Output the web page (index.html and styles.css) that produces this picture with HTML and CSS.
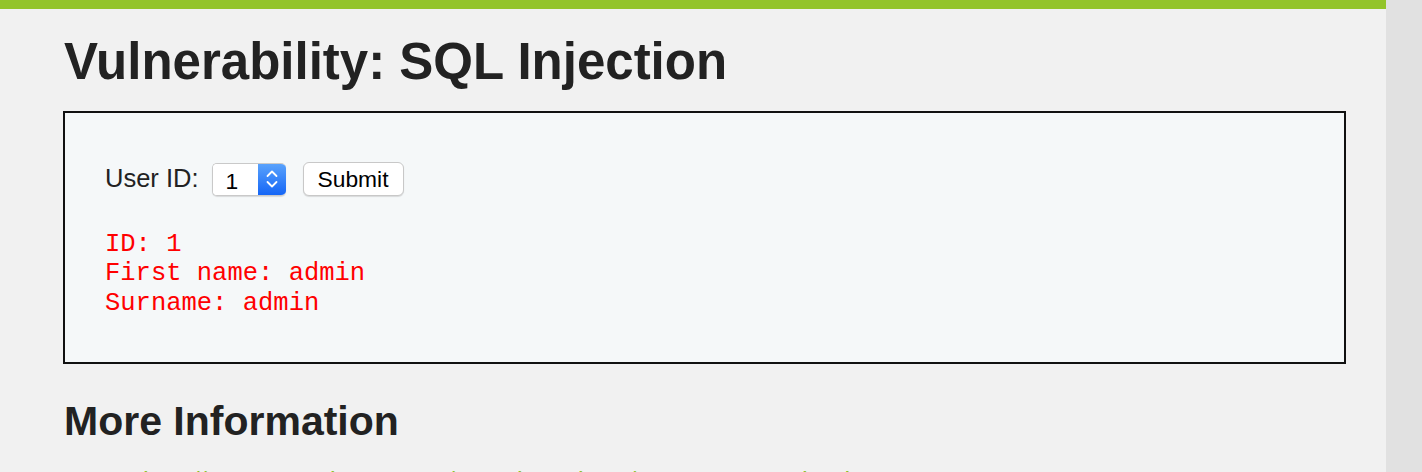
FILE: index.html
```html
<!DOCTYPE html>
<html lang="en">
<head>
<meta charset="utf-8">
<title>Vulnerability: SQL Injection</title>
<link rel="stylesheet" href="styles.css">
</head>
<body>
<div class="page">
  <div class="main">
    <div class="topbar"></div>
    <div class="content">
      <h1 class="title">Vulnerability: SQL Injection</h1>
      <div class="vuln">
        <form class="form-row" action="#" method="get">
          <label class="label" for="uid">User ID:</label>
          <span class="select-wrap">
            <select id="uid" class="select"><option>1</option></select>
            <span class="arrows">
              <svg width="12" height="22" viewBox="0 0 12 22" aria-hidden="true">
                <path d="M1.5 8 L6 3.5 L10.5 8" fill="none" stroke="#fff" stroke-width="1.8" stroke-linecap="round" stroke-linejoin="round"/>
                <path d="M1.5 14 L6 18.5 L10.5 14" fill="none" stroke="#fff" stroke-width="1.8" stroke-linecap="round" stroke-linejoin="round"/>
              </svg>
            </span>
          </span>
          <button class="submit" type="button">Submit</button>
        </form>
        <pre class="result">ID: 1
First name: admin
Surname: admin</pre>
      </div>
      <h2 class="subtitle">More Information</h2>
      <ul class="links">
        <li><a href="#">http://www.securiteam.com/securityreviews/5DP0N1P76E.html</a></li>
        <li><a href="#">https://en.wikipedia.org/wiki/SQL_injection</a></li>
      </ul>
    </div>
  </div>
  <div class="side"></div>
</div>
</body>
</html>
```
FILE: styles.css
```css
html, body {
  margin: 0;
  padding: 0;
  height: 472px;
  overflow: hidden;
}
body {
  background: #f1f1f1;
  font-family: "Liberation Sans", Arial, sans-serif;
  color: #222;
}
.page {
  display: flex;
  height: 472px;
}
.main {
  flex: 1;
  min-width: 0;
}
.side {
  width: 36px;
  background: #e1e1e1;
}
.topbar {
  height: 9px;
  background: #93c42a;
}
.content {
  padding: 0 40px 0 63px;
}
.title {
  margin: 24px 0 0 1px;
  font-size: 51px;
  line-height: 58px;
  font-weight: bold;
  color: #222;
}
.vuln {
  margin-top: 20px;
  border: 2px solid #111;
  background: #f5f8f9;
  padding: 49px 40px 44px 40px;
}
.form-row {
  display: flex;
  align-items: center;
  height: 34px;
  margin: 0;
}
.label {
  font-size: 25.5px;
  line-height: 29px;
  padding-bottom: 2px;
  color: #222;
  margin-right: 13px;
}
.select-wrap {
  display: inline-flex;
  width: 74px;
  height: 33px;
  box-sizing: border-box;
  border: 1px solid #c9c9c9;
  border-right: none;
  border-radius: 5px;
  overflow: hidden;
  background: #fff;
  box-shadow: 0 1px 1px rgba(0, 0, 0, 0.12);
}
.select {
  appearance: none;
  -webkit-appearance: none;
  border: none;
  outline: none;
  background: #fff;
  width: 45px;
  padding: 3px 0 0 13px;
  margin: 0;
  font-family: "Liberation Sans", Arial, sans-serif;
  font-size: 22.8px;
  color: #000;
}
.arrows {
  flex: 1;
  display: flex;
  align-items: center;
  justify-content: center;
  background: linear-gradient(#59a2fc, #1566f6);
}
.submit {
  margin-left: 17px;
  width: 101px;
  height: 34px;
  box-sizing: border-box;
  border: 1px solid #c8c8c8;
  border-radius: 6px;
  background: #fff;
  box-shadow: 0 1px 1px rgba(0, 0, 0, 0.12);
  font-family: "Liberation Sans", Arial, sans-serif;
  font-size: 22.8px;
  color: #000;
  padding: 1px 0 0 0;
}
.result {
  margin: 34px 0 0 0;
  font-family: "Liberation Mono", "Courier New", monospace;
  font-size: 25.5px;
  line-height: 29.3px;
  color: #ff0000;
}
.subtitle {
  margin: 34px 0 0 1px;
  font-size: 41px;
  line-height: 47px;
  font-weight: bold;
  color: #222;
}
.links {
  margin: 22px 0 0 0;
  padding-left: 80px;
  font-size: 25.5px;
  line-height: 29.3px;
}
.links a {
  color: #8fc02e;
  text-decoration: none;
}
```
